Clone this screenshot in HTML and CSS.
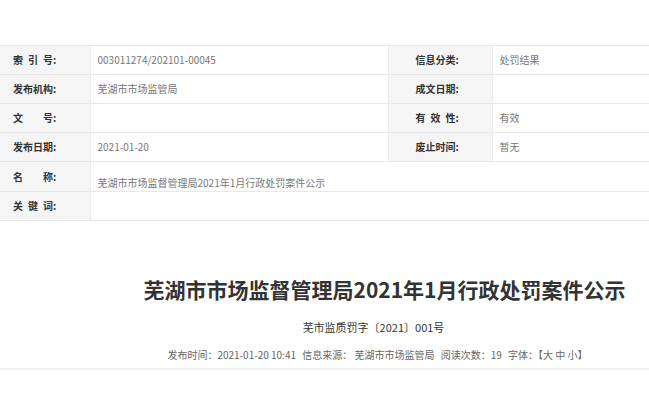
FILE: index.html
```html
<html lang="zh-CN">
  <head>
    <meta charset="UTF-8" />
    <meta name="viewport" content="width=device-width, initial-scale=1.0" />
    <title>芜湖市市场监督管理局2021年1月行政处罚案件公示</title>
    <link rel="stylesheet" href="styles.css">
  </head>
  <body>
    <div class="info">
      <table>
        <colgroup>
          <col class="c-label" />
          <col class="c-value" />
          <col class="c-label2" />
          <col />
        </colgroup>
        <tbody>
          <tr>
            <th>索&ensp;引&ensp;号:</th>
            <td>003011274/202101-00045</td>
            <th class="mid">信息分类:</th>
            <td>处罚结果</td>
          </tr>
          <tr>
            <th>发布机构:</th>
            <td>芜湖市市场监管局</td>
            <th class="mid">成文日期:</th>
            <td></td>
          </tr>
          <tr>
            <th>文&emsp;&emsp;号:</th>
            <td></td>
            <th class="mid">有&ensp;效&ensp;性:</th>
            <td>有效</td>
          </tr>
          <tr>
            <th>发布日期:</th>
            <td>2021-01-20</td>
            <th class="mid">废止时间:</th>
            <td>暂无</td>
          </tr>
          <tr class="name-row">
            <th>名&emsp;&emsp;称:</th>
            <td colspan="3">芜湖市市场监督管理局2021年1月行政处罚案件公示</td>
          </tr>
          <tr>
            <th>关&ensp;键&ensp;词:</th>
            <td colspan="3"></td>
          </tr>
        </tbody>
      </table>
    </div>

    <div class="article">
      <h1>芜湖市市场监督管理局2021年1月行政处罚案件公示</h1>
      <p class="doc-no">芜市监质罚字〔2021〕001号</p>
      <p class="meta">
        <span>发布时间：2021-01-20 10:41</span>
        <span>信息来源：&nbsp;芜湖市市场监管局</span>
        <span>阅读次数：19</span>
        <span>字体：【大 中 小】</span>
      </p>
    </div>
  </body>
</html>
```

FILE: styles.css
```css
body {
  background-color: #fff;
  color: #333;
  font-family: "Noto Sans CJK SC", "Open Sans", sans-serif;
  margin: 0;
}

.info {
  padding-top: 45px;
}

table {
  border-collapse: collapse;
  table-layout: fixed;
  width: 100%;
}

.c-label {
  width: 90px;
}

.c-value {
  width: 298px;
}

.c-label2 {
  width: 104px;
}

th,
td {
  border-bottom: 1px solid #e8e8e8;
  border-top: 1px solid #e8e8e8;
  font-size: 10px;
  height: 29px;
  line-height: 14px;
  padding: 0 7px;
  vertical-align: middle;
}

th {
  background-color: #f5f5f5;
  border-right: 1px solid #ebebeb;
  color: #333;
  font-weight: bold;
  padding-left: 13px;
  text-align: left;
}

th.mid {
  border-left: 1px solid #ebebeb;
  padding-left: 27px;
}

td {
  color: #777;
}

.name-row th {
  height: 30px;
}

.name-row td {
  padding-top: 12px;
}

.article {
  border-bottom: 2px solid #f0f0f0;
  padding: 53px 0 6px 120px;
  text-align: center;
}

h1 {
  color: #333;
  font-size: 21px;
  font-weight: bold;
  line-height: 30px;
  margin: 0;
}

.doc-no {
  font-size: 11px;
  line-height: 16px;
  margin: 15px 0 0;
  padding-right: 22px;
}

.meta {
  color: #666;
  font-size: 10px;
  line-height: 14px;
  margin: 13px 0 0;
  padding-right: 14px;
}

.meta span {
  margin: 0 2px;
}
```
